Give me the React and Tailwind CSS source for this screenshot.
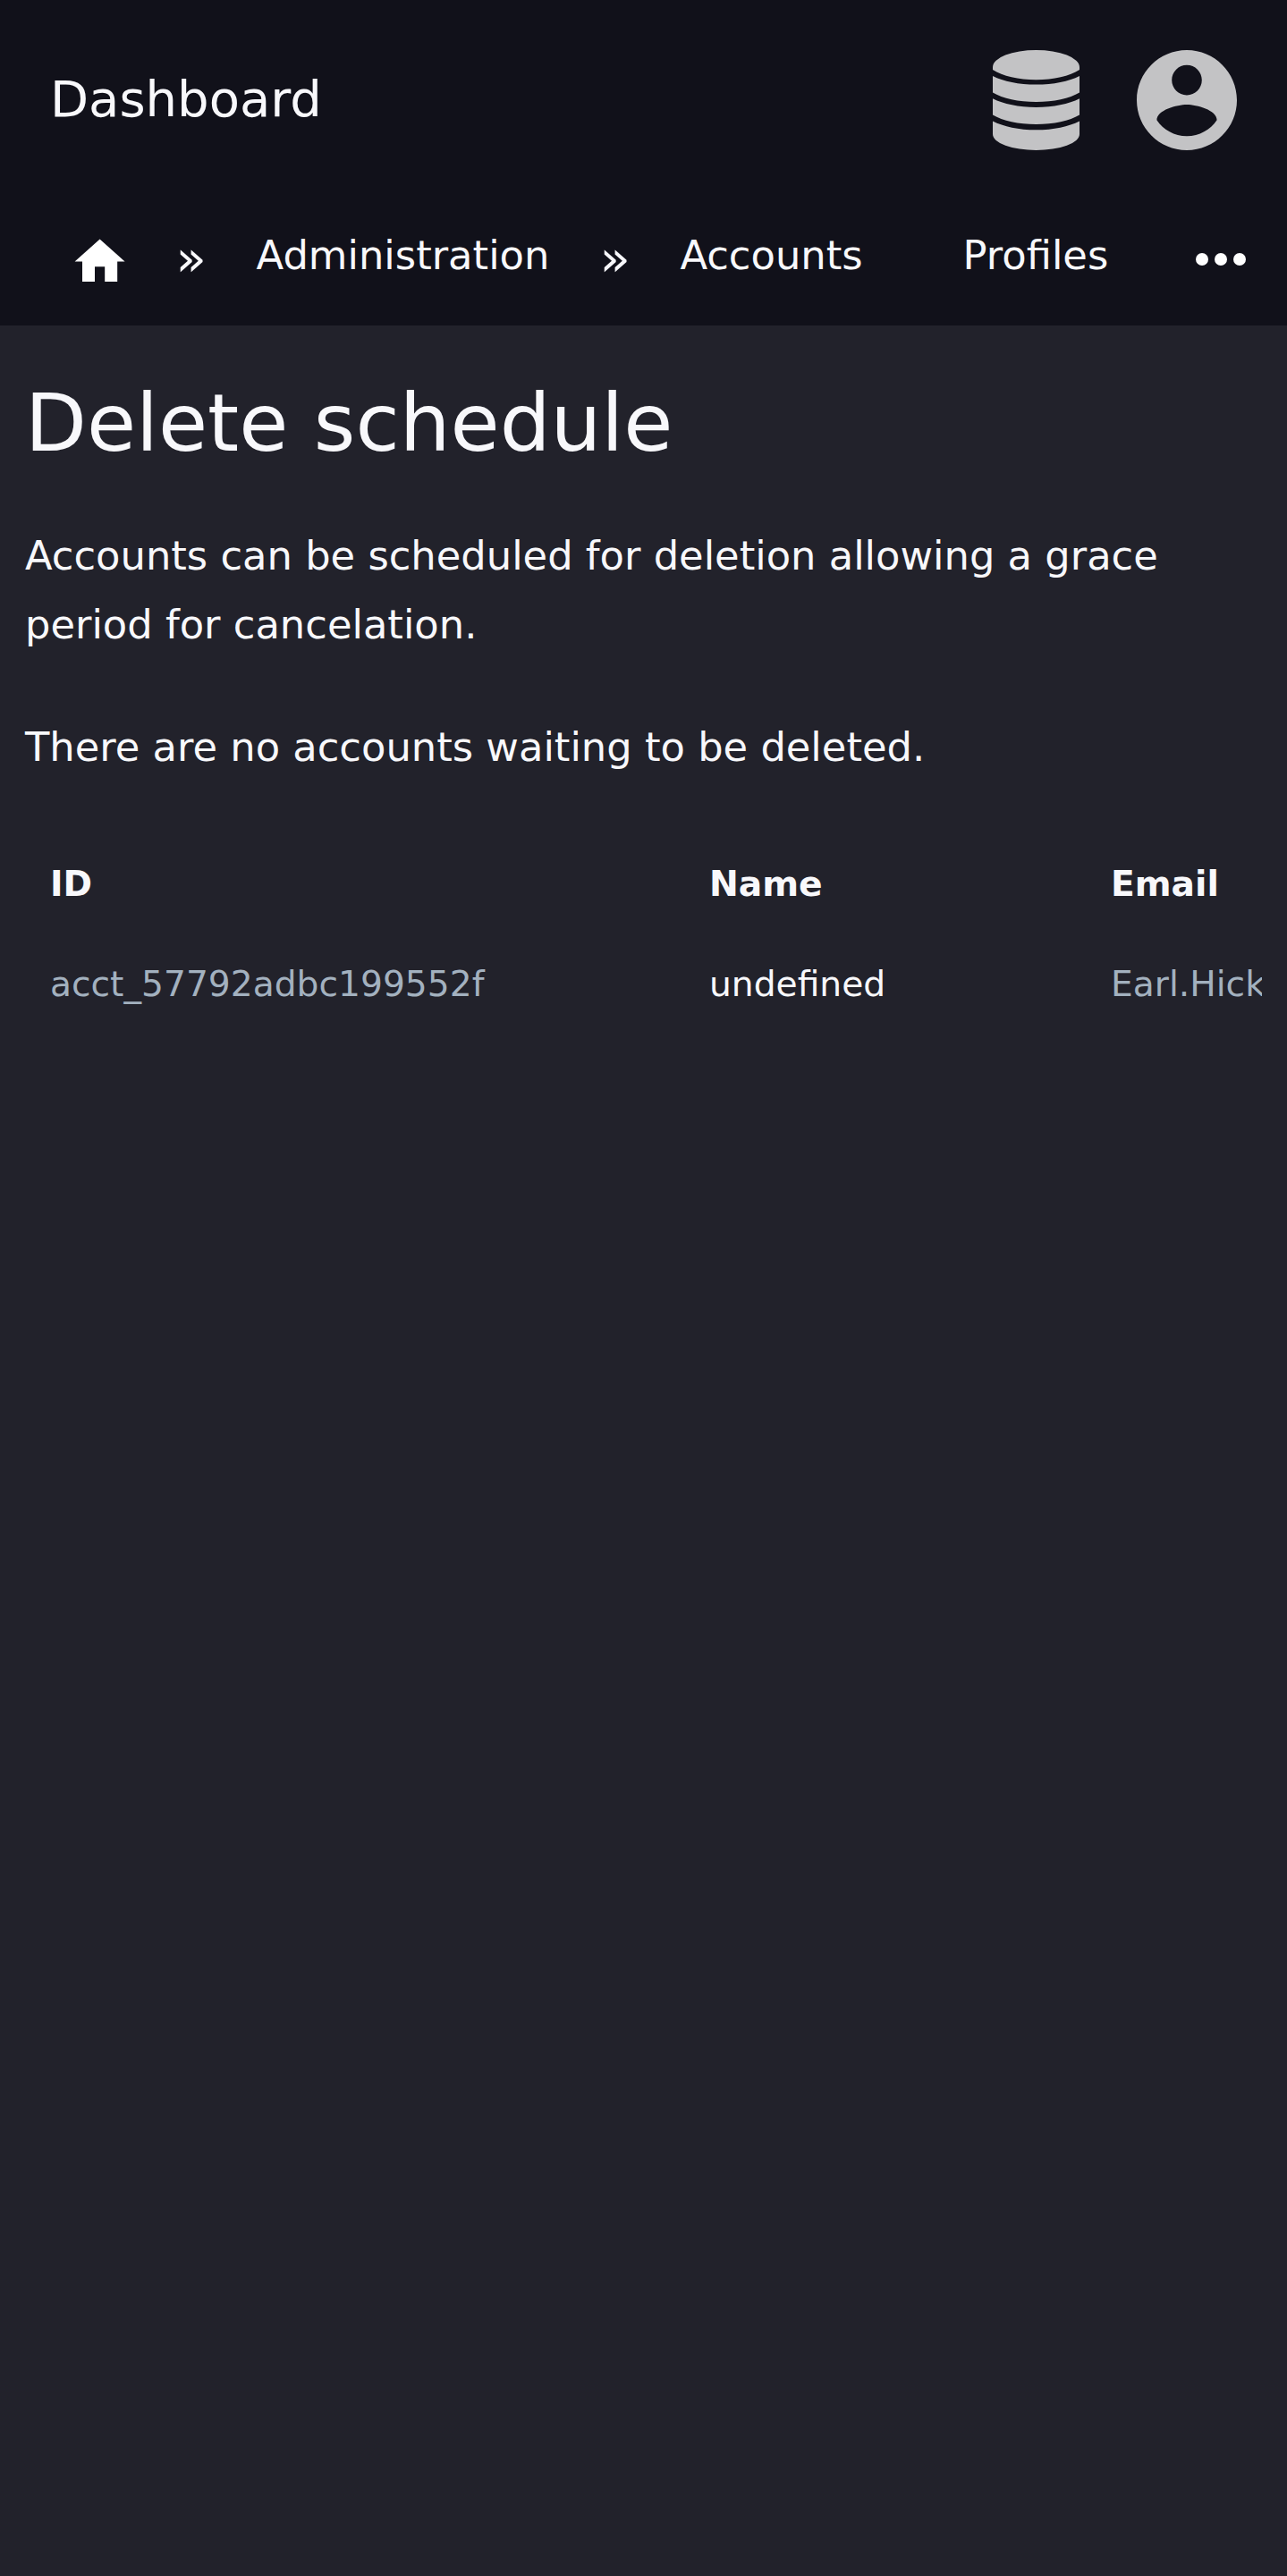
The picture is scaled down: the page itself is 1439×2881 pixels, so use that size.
import React from "react";

function DatabaseIcon() {
  return (
    <svg viewBox="0 0 97 112" className="h-[112px] w-[97px] fill-[#c3c3c5]">
      <path d="M0 19A48.500 19 0 0 1 97 19V22C86 29 68 33.300 48.500 33.300S11 29 0 22Z" />
      <path d="M0 29C12 35 29 38.600 48.500 38.600S85 35 97 29V47.500C86 54 68 58 48.500 58S11 54 0 47.500Z" />
      <path d="M0 54.300C12 60.300 29 64 48.500 64S85 60.300 97 54.300V72.500C86 79 68 83 48.500 83S11 79 0 72.500Z" />
      <path d="M0 79.400C12 85.500 29 89.200 48.500 89.200S85 85.500 97 79.400V94A48.500 18 0 0 1 0 94Z" />
    </svg>
  );
}

function AccountIcon() {
  return (
    <svg viewBox="2 2 20 20" className="h-[112px] w-[112px] fill-[#c3c3c5]">
      <path d="M12 2C6.480 2 2 6.480 2 12s4.480 10 10 10 10-4.480 10-10S17.520 2 12 2zm0 3c1.660 0 3 1.340 3 3s-1.340 3-3 3-3-1.340-3-3 1.340-3 3-3zm0 14.200c-2.500 0-4.710-1.280-6-3.220.03-1.990 4-3.080 6-3.080 1.990 0 5.970 1.090 6 3.080-1.290 1.940-3.500 3.220-6 3.220z" />
    </svg>
  );
}

function Separator() {
  return <span className="mt-[32px] w-[34px] shrink-0 text-[56px] leading-[65px]">»</span>;
}

export default function App() {
  return (
    <div className="h-[2881px] w-[1439px] overflow-hidden bg-[#22222b] font-['DejaVu_Sans',sans-serif] text-[#f8f8fb]">
      <header className="h-[364px] bg-[#11111a]">
        <div className="flex h-[224px] items-center justify-between px-[56px]">
          <div className="mb-[3px] text-[56px] leading-[65px]">Dashboard</div>
          <div className="flex items-center gap-[64px]">
            <DatabaseIcon />
            <AccountIcon />
          </div>
        </div>
        <nav className="flex h-[140px] items-start whitespace-nowrap text-[44.800px] leading-[53px]">
          <svg viewBox="0 0 24 24" className="ml-[78.400px] mt-[34.600px] h-[67.200px] w-[67.200px] shrink-0 fill-white">
            <path d="M10 20v-6h4v6h5v-8h3L12 3 2 12h3v8z" />
          </svg>
          <div className="ml-[51px] flex">
            <Separator />
          </div>
          <a className="ml-[56px] mt-[35px]">Administration</a>
          <div className="ml-[56px] flex">
            <Separator />
          </div>
          <a className="ml-[56px] mt-[35px]">Accounts</a>
          <a className="ml-[112px] mt-[35px]">Profiles</a>
          <svg viewBox="4 10 16 4" className="ml-auto mr-[46px] mt-[59px] h-[14px] w-[56px] shrink-0 fill-white">
            <circle cx="6" cy="12" r="2" />
            <circle cx="12" cy="12" r="2" />
            <circle cx="18" cy="12" r="2" />
          </svg>
        </nav>
      </header>
      <main className="px-[28px] pt-[57px]">
        <h1 className="text-[89.600px] leading-[104px]">Delete schedule</h1>
        <p className="mt-[58px] text-[44.800px] leading-[77px]">
          Accounts can be scheduled for deletion allowing a grace period for cancelation.
        </p>
        <p className="mt-[60px] text-[44.800px] leading-[77px]">There are no accounts waiting to be deleted.</p>
        <div className="mt-[59px] overflow-hidden whitespace-nowrap text-[39.200px] leading-[55px]">
          <div className="grid w-[1900px] grid-cols-[737px_449px_1fr] font-bold">
            <div className="px-[28px] pt-[28px] pb-[29px]">ID</div>
            <div className="px-[28px] pt-[28px] pb-[29px]">Name</div>
            <div className="px-[28px] pt-[28px] pb-[29px]">Email</div>
          </div>
          <div className="grid w-[1900px] grid-cols-[737px_449px_1fr]">
            <a className="px-[28px] pt-[28px] pb-[29px] text-[#a3b1bf]">acct_57792adbc199552f</a>
            <div className="px-[28px] pt-[28px] pb-[29px]">undefined</div>
            <a className="px-[28px] pt-[28px] pb-[29px] text-[#a3b1bf]">Earl.Hick</a>
          </div>
        </div>
      </main>
    </div>
  );
}
